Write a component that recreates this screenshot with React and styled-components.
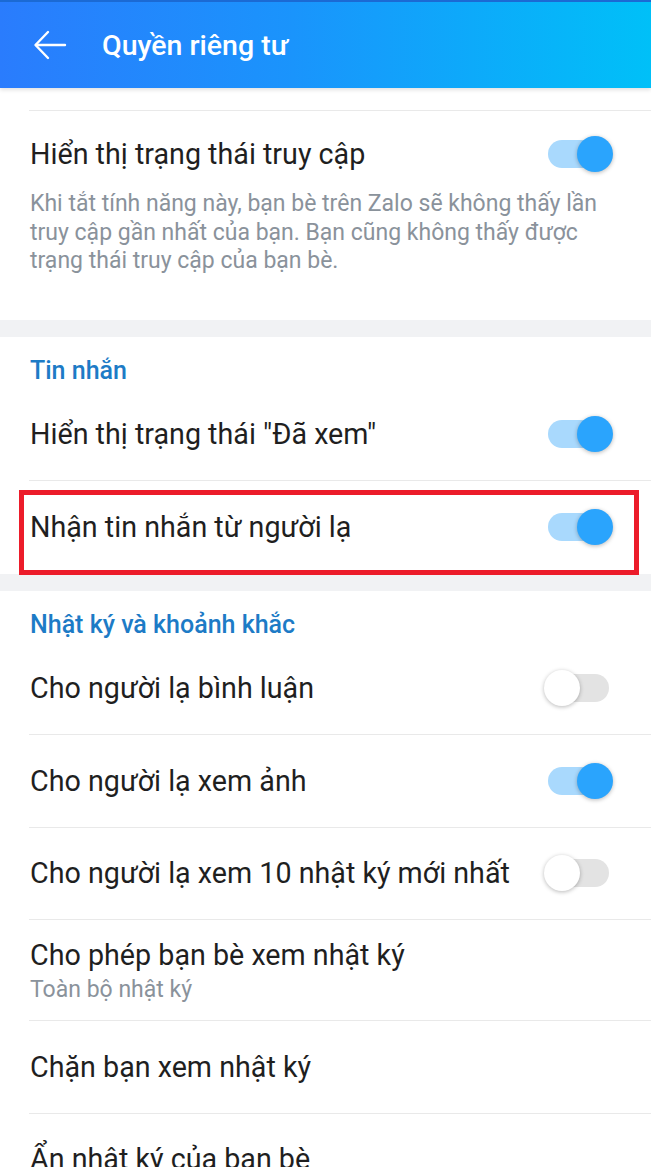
import React from 'react'
import styled, { createGlobalStyle } from 'styled-components'

const GlobalStyle = createGlobalStyle`
  html, body { margin: 0; padding: 0; background: #fff; }
  body { font-family: Roboto, "Noto Sans", sans-serif; -webkit-font-smoothing: antialiased; }
  * { box-sizing: border-box; }
`

const Page = styled.div`
  width: 651px;
  height: 1167px;
  overflow: hidden;
  background: #fff;
`

const Header = styled.div`
  position: relative;
  z-index: 2;
  height: 88px;
  border-top: 2px solid #1b6ad4;
  background: linear-gradient(90deg, #2a7cfd 0%, #1a94fc 45%, #00c0f8 100%);
  box-shadow: 0 2px 4px rgba(0,0,0,0.12);
  display: flex;
  align-items: center;
  padding-left: 33px;
  color: #fff;
`

const BackBtn = styled.div`
  width: 36px;
  height: 32px;
  display: flex;
  align-items: center;
  margin-right: 33px;
`

const Title = styled.h1`
  margin: 0;
  font-size: 28.5px;
  font-weight: 500;
`

const Section = styled.section`
  background: #fff;
  border-bottom: ${p => (p.last ? 'none' : '17px solid #f1f2f4')};
`

const SectionTitle = styled.div`
  padding: 22px 30px 6px;
  font-size: 25px;
  line-height: 24px;
  font-weight: 500;
  color: #1d7bc6;
`

const Stub = styled.div`
  height: 23px;
  margin-left: 29px;
  border-bottom: 1px solid #e9e9e9;
`

const Row = styled.div`
  position: relative;
  margin-left: 29px;
  padding-right: 42px;
  min-height: ${p => (p.tall ? '101px' : '92.5px')};
  display: flex;
  align-items: center;
  justify-content: space-between;
  border-bottom: ${p => (p.noLine ? 'none' : '1px solid #e9e9e9')};
`

const RowText = styled.div`
  display: flex;
  flex-direction: column;
  padding-left: 1px;
`

const Label = styled.div`
  font-size: 28.7px;
  line-height: 34px;
  color: #1f1f1f;
  white-space: nowrap;
`

const Sub = styled.div`
  margin-top: 5px;
  font-size: 23px;
  line-height: 26px;
  color: #8a929b;
`

const DescRow = styled.div`
  margin-left: 29px;
  padding: 26px 0 44px 0;
`

const DescHead = styled.div`
  display: flex;
  align-items: center;
  justify-content: space-between;
  padding-left: 1px;
  padding-right: 42px;
  margin-bottom: 19px;
`

const Desc = styled.p`
  margin: 0;
  padding-left: 1px;
  padding-right: 28px;
  font-size: 23px;
  line-height: 28.5px;
  color: #8a929b;
`

const Track = styled.div`
  position: relative;
  width: 61px;
  height: 28px;
  border-radius: 14px;
  background: ${p => (p.on ? '#a9d9fd' : '#e3e3e3')};
  flex-shrink: 0;
`

const Knob = styled.div`
  position: absolute;
  top: -4px;
  left: ${p => (p.on ? '29px' : '-4px')};
  width: 36px;
  height: 36px;
  border-radius: 50%;
  background: ${p => (p.on ? '#2aa4fd' : '#ffffff')};
  box-shadow: 0 1px 4px rgba(0,0,0,0.28);
`

const Highlight = styled.div`
  position: absolute;
  top: 8.5px;
  left: -10px;
  right: 12px;
  bottom: -1px;
  border: 5px solid #ec1c2a;
  pointer-events: none;
`

const Switch = ({ on }) => (
  <Track on={on ? 1 : 0}>
    <Knob on={on ? 1 : 0} />
  </Track>
)

const BackIcon = () => (
  <svg width="34" height="30" viewBox="0 0 34 30" fill="none" stroke="#fff" strokeWidth="2.4" strokeLinecap="round" strokeLinejoin="round">
    <path d="M32 15H3" />
    <path d="M15 2L2.5 15L15 28" />
  </svg>
)

export default function App() {
  return (
    <Page>
      <GlobalStyle />
      <Header>
        <BackBtn><BackIcon /></BackBtn>
        <Title>Quyền riêng tư</Title>
      </Header>

      <Section>
        <Stub />
        <DescRow>
          <DescHead>
            <Label>Hiển thị trạng thái truy cập</Label>
            <Switch on />
          </DescHead>
          <Desc>
            Khi tắt tính năng này, bạn bè trên Zalo sẽ không thấy lần truy cập gần nhất của bạn. Bạn cũng không thấy được trạng thái truy cập của bạn bè.
          </Desc>
        </DescRow>
      </Section>

      <Section>
        <SectionTitle>Tin nhắn</SectionTitle>
        <Row>
          <RowText><Label>Hiển thị trạng thái "Đã xem"</Label></RowText>
          <Switch on />
        </Row>
        <Row noLine>
          <RowText><Label>Nhận tin nhắn từ người lạ</Label></RowText>
          <Switch on />
          <Highlight />
        </Row>
      </Section>

      <Section last>
        <SectionTitle>Nhật ký và khoảnh khắc</SectionTitle>
        <Row>
          <RowText><Label>Cho người lạ bình luận</Label></RowText>
          <Switch />
        </Row>
        <Row>
          <RowText><Label>Cho người lạ xem ảnh</Label></RowText>
          <Switch on />
        </Row>
        <Row>
          <RowText><Label>Cho người lạ xem 10 nhật ký mới nhất</Label></RowText>
          <Switch />
        </Row>
        <Row tall>
          <RowText>
            <Label>Cho phép bạn bè xem nhật ký</Label>
            <Sub>Toàn bộ nhật ký</Sub>
          </RowText>
        </Row>
        <Row>
          <RowText><Label>Chặn bạn xem nhật ký</Label></RowText>
        </Row>
        <Row>
          <RowText><Label>Ẩn nhật ký của bạn bè</Label></RowText>
        </Row>
      </Section>
    </Page>
  )
}
